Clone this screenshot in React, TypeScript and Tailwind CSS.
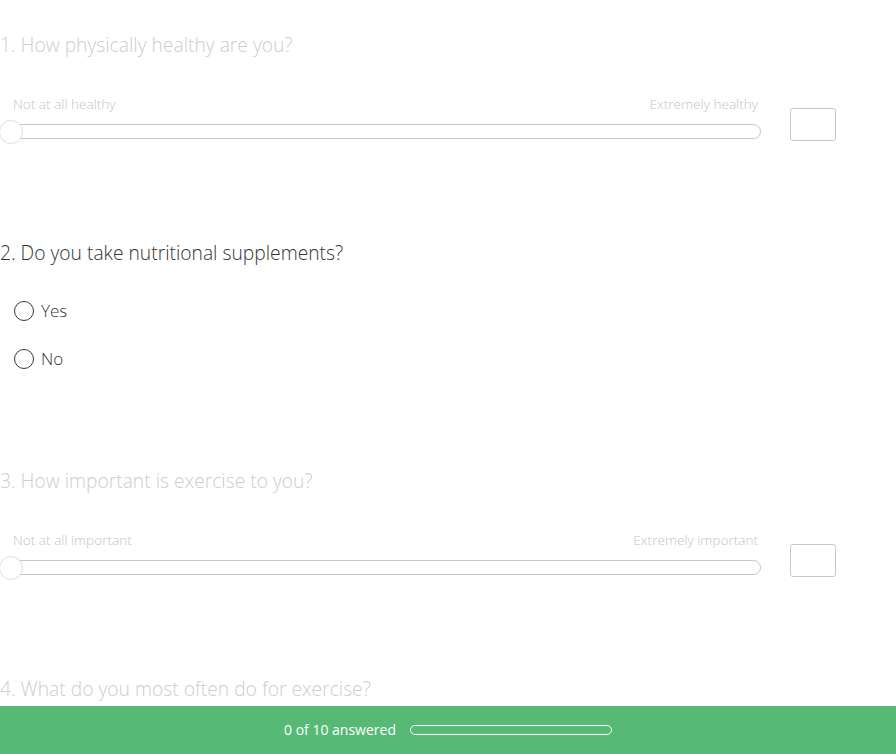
import React from "react";

const font = "font-['Open_Sans','Liberation_Sans',sans-serif]";

function SliderQuestion({ n, title, left, right, mt }: { n: number; title: string; left: string; right: string; mt: string }) {
  return (
    <div className={mt}>
      <h2 className="text-[19.25px] leading-[24px] font-light text-[#cdcdcd]">
        {n}. {title}
      </h2>
      <div className="mt-[39px] flex items-start">
        <div className="w-[761px]">
          <div className="flex justify-between pl-[13px] pr-[3px] text-[13.6px] leading-[16px] font-light text-[#c4c4c4]">
            <span>{left}</span>
            <span>{right}</span>
          </div>
          <div className="relative mt-[12px] h-[15px] rounded-full border border-[#c6c6c6] bg-white">
            <div className="absolute left-[-2px] top-[-5px] h-[24px] w-[24px] rounded-full border border-[#dedede] bg-white" />
          </div>
        </div>
        <div className="ml-[29px] mt-[12px] h-[33px] w-[46px] rounded-[3px] border border-[#c8c8c8] bg-white" />
      </div>
    </div>
  );
}

function Radio({ label, mt }: { label: string; mt: string }) {
  return (
    <div className={`${mt} flex items-center`}>
      <div className="ml-[14px] h-[20px] w-[20px] rounded-full border-[1.5px] border-[#3a3a3a] bg-white" />
      <span className="ml-[7px] text-[17px] leading-[20px] font-light text-[#333333]">{label}</span>
    </div>
  );
}

export default function App() {
  return (
    <div className={`relative h-[754px] w-[896px] overflow-hidden bg-white ${font}`}>
      <div className="pt-[33px]">
        <SliderQuestion n={1} title="How physically healthy are you?" left="Not at all healthy" right="Extremely healthy" mt="" />
        <div className="mt-[100px]">
          <h2 className="text-[19.25px] leading-[24px] font-light text-[#333333]">2. Do you take nutritional supplements?</h2>
          <Radio label="Yes" mt="mt-[36px]" />
          <Radio label="No" mt="mt-[28px]" />
        </div>
        <SliderQuestion n={3} title="How important is exercise to you?" left="Not at all important" right="Extremely important" mt="mt-[100px]" />
        <div className="mt-[100px]">
          <h2 className="text-[19.25px] leading-[24px] font-light text-[#cdcdcd]">4. What do you most often do for exercise?</h2>
        </div>
      </div>
      <div className="absolute bottom-0 left-0 flex h-[48px] w-full items-center justify-center gap-[14px] bg-[#56ba76]">
        <span className="text-[14px] leading-[18px] text-white">0 of 10 answered</span>
        <div className="h-[10px] w-[202px] rounded-full border-[1.5px] border-white" />
      </div>
    </div>
  );
}
